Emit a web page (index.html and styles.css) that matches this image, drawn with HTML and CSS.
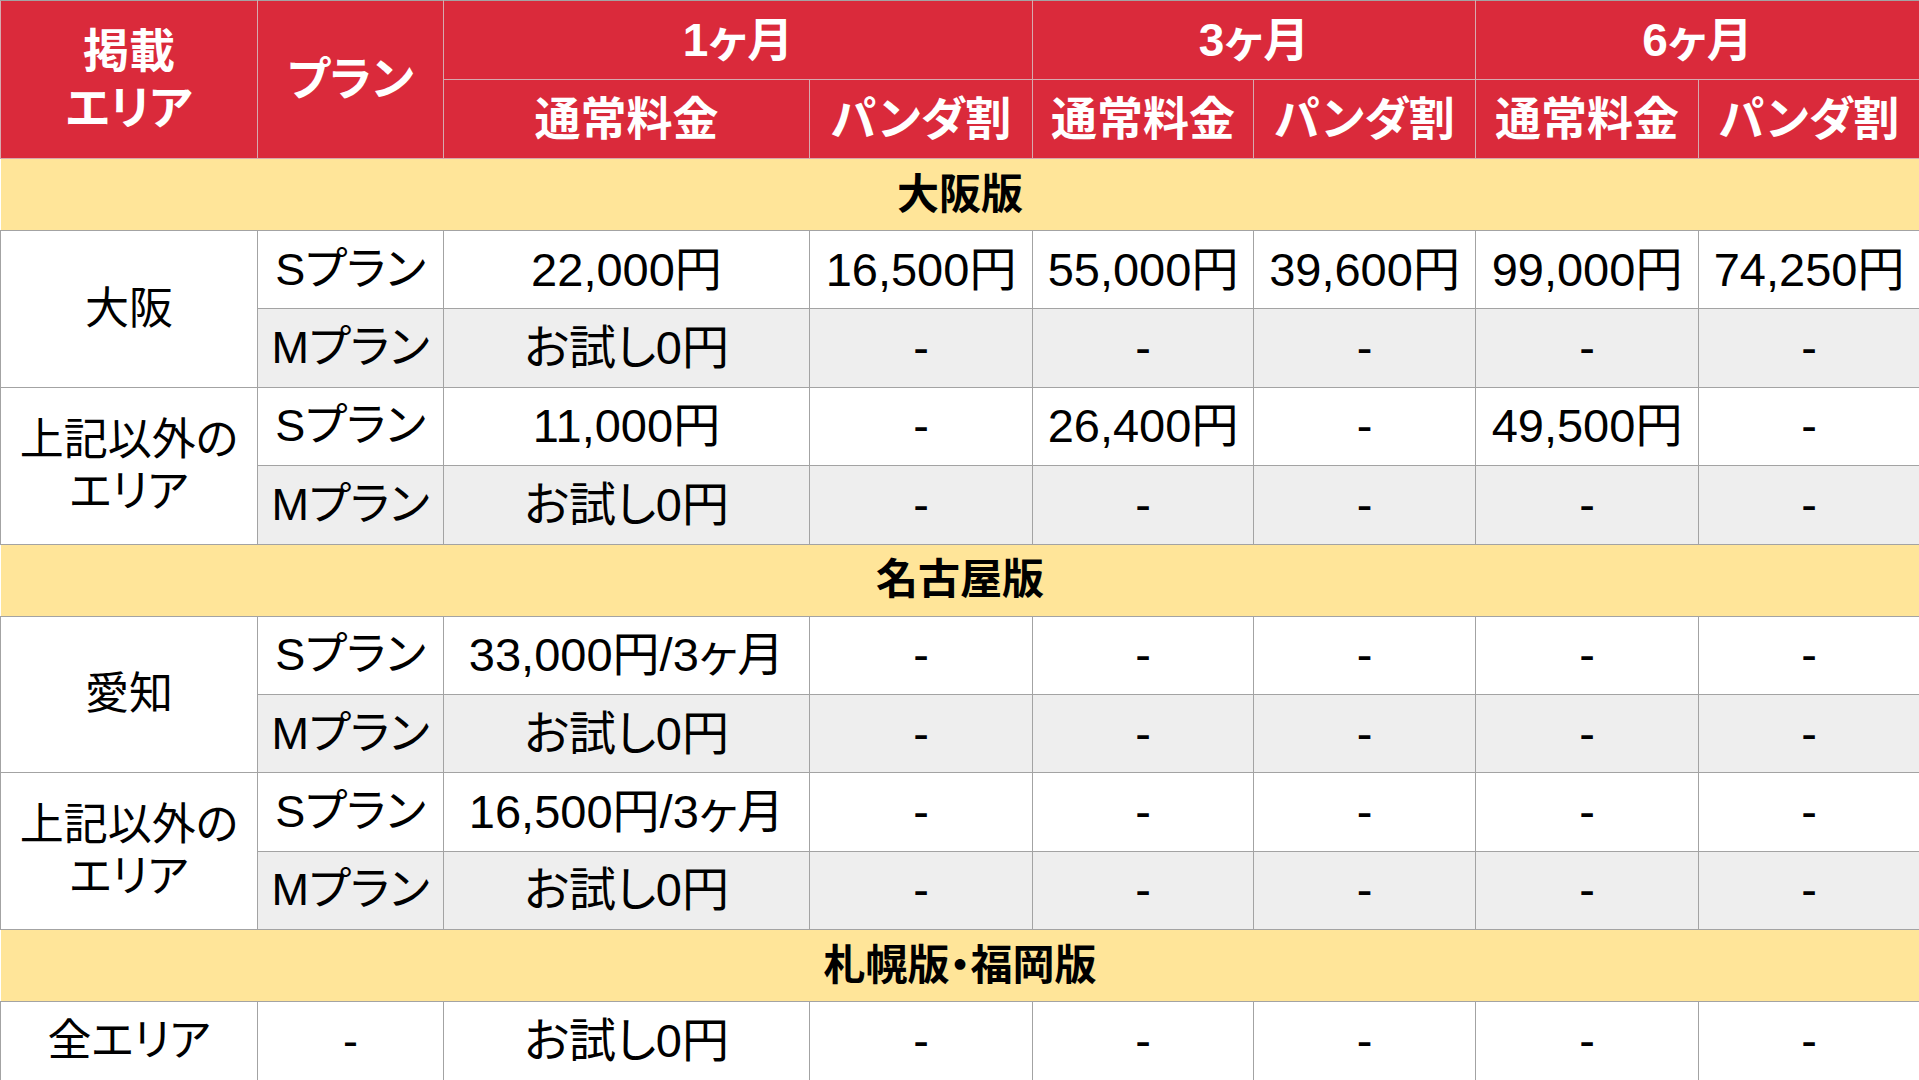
FILE: index.html
```html
<!DOCTYPE html>
<html lang="ja">
<head>
<meta charset="utf-8">
<title>料金表</title>
<link rel="stylesheet" href="styles.css">
</head>
<body>
<table class="price">
  <colgroup>
    <col class="c-area"><col class="c-plan"><col class="c-1n"><col class="c-1p"><col class="c-3n"><col class="c-3p"><col class="c-6n"><col class="c-6p">
  </colgroup>
  <thead>
    <tr class="hrow">
      <th rowspan="2" class="h-area">掲載<br>エリア</th>
      <th rowspan="2">プラン</th>
      <th colspan="2">1ヶ月</th>
      <th colspan="2">3ヶ月</th>
      <th colspan="2">6ヶ月</th>
    </tr>
    <tr class="hrow">
      <th>通常料金</th><th>パンダ割</th>
      <th>通常料金</th><th>パンダ割</th>
      <th>通常料金</th><th>パンダ割</th>
    </tr>
  </thead>
  <tbody>
    <tr class="band"><td colspan="8">大阪版</td></tr>
    <tr class="srow">
      <td rowspan="2" class="area">大阪</td>
      <td class="plan">Sプラン</td><td>22,000円</td><td>16,500円</td><td>55,000円</td><td>39,600円</td><td>99,000円</td><td>74,250円</td>
    </tr>
    <tr class="mrow">
      <td class="plan">Mプラン</td><td>お試し0円</td><td>-</td><td>-</td><td>-</td><td>-</td><td>-</td>
    </tr>
    <tr class="srow">
      <td rowspan="2" class="area">上記以外の<br>エリア</td>
      <td class="plan">Sプラン</td><td>11,000円</td><td>-</td><td>26,400円</td><td>-</td><td>49,500円</td><td>-</td>
    </tr>
    <tr class="mrow">
      <td class="plan">Mプラン</td><td>お試し0円</td><td>-</td><td>-</td><td>-</td><td>-</td><td>-</td>
    </tr>
    <tr class="band"><td colspan="8">名古屋版</td></tr>
    <tr class="srow">
      <td rowspan="2" class="area">愛知</td>
      <td class="plan">Sプラン</td><td>33,000円/3ヶ月</td><td>-</td><td>-</td><td>-</td><td>-</td><td>-</td>
    </tr>
    <tr class="mrow">
      <td class="plan">Mプラン</td><td>お試し0円</td><td>-</td><td>-</td><td>-</td><td>-</td><td>-</td>
    </tr>
    <tr class="srow">
      <td rowspan="2" class="area">上記以外の<br>エリア</td>
      <td class="plan">Sプラン</td><td>16,500円/3ヶ月</td><td>-</td><td>-</td><td>-</td><td>-</td><td>-</td>
    </tr>
    <tr class="mrow">
      <td class="plan">Mプラン</td><td>お試し0円</td><td>-</td><td>-</td><td>-</td><td>-</td><td>-</td>
    </tr>
    <tr class="band"><td colspan="8">札幌版・福岡版</td></tr>
    <tr class="srow">
      <td class="area">全エリア</td>
      <td class="plan">-</td><td>お試し0円</td><td>-</td><td>-</td><td>-</td><td>-</td><td>-</td>
    </tr>
  </tbody>
</table>
</body>
</html>
```

FILE: styles.css
```css
html, body {
  margin: 0;
  padding: 0;
  background: #ffffff;
}

.price {
  width: 1919px;
  table-layout: fixed;
  border-collapse: collapse;
  font-family: "Liberation Sans", "Noto Sans CJK JP", sans-serif;
  font-feature-settings: "palt";
  color: #000000;
}

.c-area { width: 257px; }
.c-plan { width: 186px; }
.c-1n { width: 366px; }
.c-1p { width: 223px; }
.c-3n { width: 221px; }
.c-3p { width: 222px; }
.c-6n { width: 223px; }
.c-6p { width: 221px; }

.price th,
.price td {
  padding: 0;
  text-align: center;
  vertical-align: middle;
  white-space: nowrap;
  overflow: hidden;
}

.price td {
  border: 1px solid #a3a3a3;
  font-size: 47px;
  line-height: 52px;
}

.hrow {
  height: 79px;
}

.price th {
  background: #da2a3b;
  color: #ffffff;
  font-family: "Liberation Sans", "Noto Sans CJK JP", sans-serif;
  font-weight: 700;
  font-size: 46px;
  line-height: 57px;
  border: 1px solid #d6a9ae;
}

.price thead tr:first-child th {
  border-top: 1px solid #a3a3a3;
}

.band {
  height: 72px;
}

.band td {
  background: #ffe599;
  font-weight: 700;
  font-size: 42px;
  line-height: 50px;
  border-left: none;
  border-right: none;
}

.srow,
.mrow {
  height: 78.4px;
}

.mrow td {
  background: #eeeeee;
}

.price td.plan {
  font-size: 45px;
}

.price td.area {
  background: #ffffff;
  font-size: 44px;
}
```
